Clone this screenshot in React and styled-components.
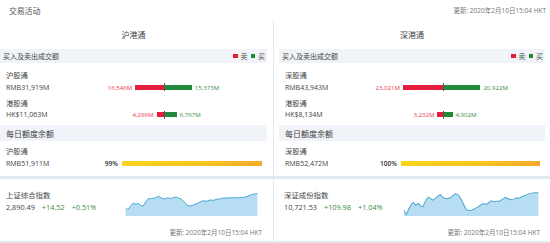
import React from "react";
import styled, { createGlobalStyle } from "styled-components";

const Global = createGlobalStyle`
  html, body { margin: 0; padding: 0; background: #fff; overflow: hidden; }
  body { font-family: "Open Sans", "Noto Sans CJK SC", sans-serif; color: #444; }
  * { box-sizing: border-box; }
`;

const Page = styled.div`
  width: 556px;
  margin-left: -5px;
`;

const TopBar = styled.div`
  height: 20px;
  display: flex;
  align-items: center;
  justify-content: space-between;
  padding: 0 5px 0 14px;
`;

const Title = styled.div`
  font-size: 8px;
  color: #555;
  letter-spacing: -0.2px;
`;

const Updated = styled.div`
  font-size: 6.5px;
  color: #777;
  white-space: nowrap;
`;

const Columns = styled.div`
  display: grid;
  grid-template-columns: 278px 278px;
  height: 156px;
`;

const Column = styled.div`
  padding: 0 6px 0 5px;
  border-left: ${(p) => (p.$divider ? "1px solid #e4e8ed" : "none")};
`;

const ColumnTitle = styled.div`
  height: 29px;
  display: flex;
  align-items: center;
  justify-content: center;
  font-size: 8px;
  color: #444;
`;

const SectionHeader = styled.div`
  height: ${(p) => (p.$tall ? 16 : 14)}px;
  background: #f0f3f7;
  display: flex;
  align-items: center;
  justify-content: space-between;
  padding: 0 2px 0 ${(p) => (p.$tall ? 6 : 3)}px;
  font-size: ${(p) => (p.$tall ? 8 : 7)}px;
  color: #444;
`;

const Legend = styled.div`
  display: flex;
  align-items: center;
  font-size: 7px;
  color: #555;
`;

const Swatch = styled.span`
  width: 4.5px;
  height: 4.5px;
  background: ${(p) => p.$color};
  margin: 0 3px 0 ${(p) => (p.$first ? 0 : 3)}px;
`;

const RowList = styled.div`
  display: flex;
  flex-direction: column;
  gap: 3.5px;
  padding-top: ${(p) => p.$top}px;
`;

const Row = styled.div`
  display: flex;
  flex-direction: column;
`;

const Label = styled.div`
  height: 12px;
  line-height: 12px;
  font-size: 7.3px;
  padding-left: 6px;
  color: #444;
`;

const ValueLine = styled.div`
  height: 12px;
  display: flex;
  align-items: center;
`;

const SellSide = styled.div`
  width: 164px;
  display: flex;
  align-items: center;
  height: 100%;
`;

const Value = styled.span`
  font-size: 7px;
  padding-left: 6px;
  color: #444;
  flex: 1;
  white-space: nowrap;
`;

const Amount = styled.span`
  font-size: 6.1px;
  color: ${(p) => p.$color};
  white-space: nowrap;
  margin: ${(p) => (p.$right ? "0 0 0 3px" : "0 3px 0 0")};
`;

const Bar = styled.span`
  height: 5px;
  background: ${(p) => p.$color};
`;

const CenterMark = styled.span`
  width: 1px;
  height: 8px;
  background: #555;
`;

const BuySide = styled.div`
  display: flex;
  align-items: center;
`;

const QuotaLine = styled.div`
  height: 12px;
  display: grid;
  grid-template-columns: 121.5px 1fr;
  align-items: center;
`;

const QuotaLeft = styled.div`
  display: flex;
  align-items: center;
  justify-content: space-between;
  padding-right: 3.5px;
`;

const Percent = styled.span`
  font-size: 6.6px;
  font-weight: 600;
  color: #333;
`;

const QuotaBar = styled.div`
  height: 5px;
  margin-right: 5px;
  background: linear-gradient(90deg, #fdd41c 0%, #fbc421 60%, #f6a92a 100%);
`;

const Bottom = styled.div`
  display: grid;
  grid-template-columns: 278px 278px;
  border-top: 3px solid #e3e8ee;
  border-bottom: 3px solid #e3e8ee;
  height: 68px;
`;

const IndexCard = styled.div`
  height: 62px;
  padding: 10px 11px 0 ${(p) => (p.$divider ? 10 : 11)}px;
  border-left: ${(p) => (p.$divider ? "1px solid #e4e8ed" : "none")};
  display: grid;
  grid-template-columns: ${(p) => (p.$divider ? 120 : 119)}px 1fr;
  grid-template-rows: 27px auto;
`;

const IndexInfo = styled.div`
  display: flex;
  flex-direction: column;
`;

const IndexName = styled.div`
  height: 12px;
  line-height: 12px;
  font-size: 7.4px;
  color: #444;
`;

const IndexValues = styled.div`
  height: 12px;
  display: flex;
  align-items: center;
  gap: 7px;
  font-size: 7.3px;
  color: #444;
  white-space: nowrap;
`;

const Change = styled.span`
  color: #3a8a3e;
`;

const Chart = styled.svg`
  display: block;
  margin-top: ${(p) => p.$top}px;
  margin-right: ${(p) => p.$right}px;
  width: calc(100% - ${(p) => p.$right}px);
  height: ${(p) => p.$h}px;
`;

const CardFoot = styled.div`
  grid-column: 1 / span 2;
  display: flex;
  justify-content: flex-end;
  align-items: center;
  height: 10px;
  margin-top: 11px;
`;

const RED = "#e31e3d";
const GREEN = "#1f8a3a";
const RED_TEXT = "#e8374e";
const GREEN_TEXT = "#3b8a46";
const K = 1.74 / 1000;

const flows = {
  sh: [
    { name: "沪股通", value: "RMB31,919M", sell: 16546, buy: 15373 },
    { name: "港股通", value: "HK$11,063M", sell: 4296, buy: 6767 },
  ],
  sz: [
    { name: "深股通", value: "RMB43,943M", sell: 23021, buy: 20922 },
    { name: "港股通", value: "HK$8,134M", sell: 3232, buy: 4902 },
  ],
};

const fmt = (n) => n.toLocaleString("en-US") + "M";

const chartSH = [
  [377, 97], [383, 103], [392, 92], [400, 83], [408, 87], [415, 84], [422, 90], [430, 92],
  [437, 80], [445, 70], [455, 70], [465, 68], [475, 63], [483, 67], [490, 70], [497, 70],
  [505, 67], [512, 70], [520, 67], [528, 65], [536, 68], [545, 72], [553, 80], [560, 88],
  [568, 92], [578, 90], [590, 85], [600, 80], [612, 76], [620, 78], [630, 74], [640, 75],
  [652, 72], [662, 70], [672, 68], [685, 68], [700, 67], [715, 68], [725, 66], [735, 66],
  [745, 62], [755, 58], [765, 56], [773, 55],
];

const chartSZ = [
  [385, 105], [392, 118], [400, 100], [407, 88], [413, 82], [420, 90], [428, 85], [435, 92],
  [442, 95], [450, 78], [458, 66], [465, 70], [472, 75], [480, 70], [488, 63], [495, 58],
  [502, 66], [510, 70], [520, 70], [528, 66], [535, 60], [542, 56], [550, 60], [558, 72],
  [565, 85], [572, 100], [580, 106], [590, 105], [600, 100], [610, 95], [620, 88], [628, 85],
  [635, 88], [643, 82], [650, 77], [658, 80], [665, 78], [675, 78], [685, 72], [693, 67],
  [700, 70], [708, 74], [718, 72], [726, 68], [733, 70], [742, 65], [750, 62], [760, 58],
  [770, 55], [780, 53], [793, 53],
];

function Spark({ pts, x0, x1, y0, y1, top, right, h }) {
  const line = pts.map((p, i) => (i ? "L" : "M") + p[0] + " " + p[1]).join(" ");
  const area = line + ` L${pts[pts.length - 1][0]} ${y1} L${pts[0][0]} ${y1} Z`;
  return (
    <Chart
      $top={top}
      $right={right}
      $h={h}
      viewBox={`${x0} ${y0} ${x1 - x0} ${y1 - y0}`}
      preserveAspectRatio="none"
    >
      <path d={area} fill="#b6ddf1" />
      <path d={line} fill="none" stroke="#4ea6d6" strokeWidth="3" vectorEffect="non-scaling-stroke" style={{ strokeWidth: 1 }} />
    </Chart>
  );
}

function FlowRow({ row }) {
  return (
    <Row>
      <Label>{row.name}</Label>
      <ValueLine>
        <SellSide>
          <Value>{row.value}</Value>
          <Amount $color={RED_TEXT}>{fmt(row.sell)}</Amount>
          <Bar $color={RED} style={{ width: row.sell * K }} />
        </SellSide>
        <CenterMark />
        <BuySide>
          <Bar $color={GREEN} style={{ width: row.buy * K }} />
          <Amount $right $color={GREEN_TEXT}>{fmt(row.buy)}</Amount>
        </BuySide>
      </ValueLine>
    </Row>
  );
}

function Panel({ title, rows, quota, divider }) {
  return (
    <Column $divider={divider}>
      <ColumnTitle>{title}</ColumnTitle>
      <SectionHeader>
        <span>买入及卖出成交额</span>
        <Legend>
          <Swatch $first $color={RED} />
          卖
          <Swatch $color={GREEN} />
          买
        </Legend>
      </SectionHeader>
      <RowList $top={6}>
        {rows.map((r, i) => (
          <FlowRow key={i} row={r} />
        ))}
      </RowList>
      <RowList $top={4.5}>
        <SectionHeader $tall>
          <span>每日额度余额</span>
        </SectionHeader>
      </RowList>
      <RowList $top={4}>
        <Row>
          <Label>{quota.name}</Label>
          <QuotaLine>
            <QuotaLeft>
              <Value>{quota.value}</Value>
              <Percent>{quota.pct}</Percent>
            </QuotaLeft>
            <QuotaBar />
          </QuotaLine>
        </Row>
      </RowList>
    </Column>
  );
}

const UPDATED = "更新: 2020年2月10日15:04 HKT";

export default function App() {
  return (
    <Page>
      <Global />
      <TopBar>
        <Title>交易活动</Title>
        <Updated>{UPDATED}</Updated>
      </TopBar>
      <Columns>
        <Panel
          title="沪港通"
          rows={flows.sh}
          quota={{ name: "沪股通", value: "RMB51,911M", pct: "99%" }}
        />
        <Panel
          divider
          title="深港通"
          rows={flows.sz}
          quota={{ name: "深股通", value: "RMB52,472M", pct: "100%" }}
        />
      </Columns>
      <Bottom>
        <IndexCard>
          <IndexInfo>
            <IndexName>上证综合指数</IndexName>
            <IndexValues>
              <span>2,890.49</span>
              <Change>+14.52</Change>
              <Change>+0.51%</Change>
            </IndexValues>
          </IndexInfo>
          <Spark pts={chartSH} x0={375} x1={775} y0={50} y1={122} top={3} right={4} h={24} />
          <CardFoot>
            <Updated>{UPDATED}</Updated>
          </CardFoot>
        </IndexCard>
        <IndexCard $divider>
          <IndexInfo>
            <IndexName>深证成份指数</IndexName>
            <IndexValues>
              <span>10,721.53</span>
              <Change>+109.98</Change>
              <Change>+1.04%</Change>
            </IndexValues>
          </IndexInfo>
          <Spark pts={chartSZ} x0={385} x1={795} y0={45} y1={122} top={1} right={1} h={26} />
          <CardFoot>
            <Updated>{UPDATED}</Updated>
          </CardFoot>
        </IndexCard>
      </Bottom>
    </Page>
  );
}
